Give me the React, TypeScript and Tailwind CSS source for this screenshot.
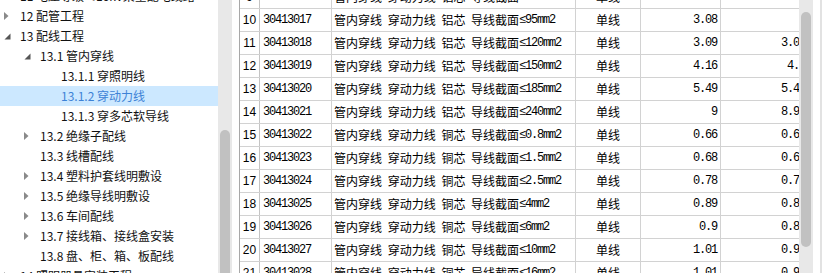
type TreeNode = {
  level: 0 | 1 | 2;
  label: string;
  arrow?: "right" | "down";
  selected?: boolean;
};

const treeNodes: TreeNode[] = [
  { level: 0, label: "11 电压等级≤10kV架空配电线路及附属设施工程", arrow: "right" },
  { level: 0, label: "12 配管工程", arrow: "right" },
  { level: 0, label: "13 配线工程", arrow: "down" },
  { level: 1, label: "13.1 管内穿线", arrow: "down" },
  { level: 2, label: "13.1.1 穿照明线" },
  { level: 2, label: "13.1.2 穿动力线", selected: true },
  { level: 2, label: "13.1.3 穿多芯软导线" },
  { level: 1, label: "13.2 绝缘子配线", arrow: "right" },
  { level: 1, label: "13.3 线槽配线" },
  { level: 1, label: "13.4 塑料护套线明敷设", arrow: "right" },
  { level: 1, label: "13.5 绝缘导线明敷设", arrow: "right" },
  { level: 1, label: "13.6 车间配线", arrow: "right" },
  { level: 1, label: "13.7 接线箱、接线盒安装", arrow: "right" },
  { level: 1, label: "13.8 盘、柜、箱、板配线" },
  { level: 0, label: "14 照明器具安装工程", arrow: "right" },
];

type Row = {
  no: number;
  code: string;
  core: string;
  size: string;
  qty: string;
  qty2: string;
};

const rows: Row[] = [
  { no: 9, code: "30413016", core: "铝芯", size: "≤70mm2", qty: "", qty2: "" },
  { no: 10, code: "30413017", core: "铝芯", size: "≤95mm2", qty: "3.08", qty2: "" },
  { no: 11, code: "30413018", core: "铝芯", size: "≤120mm2", qty: "3.09", qty2: "3.025" },
  { no: 12, code: "30413019", core: "铝芯", size: "≤150mm2", qty: "4.16", qty2: "4.16" },
  { no: 13, code: "30413020", core: "铝芯", size: "≤185mm2", qty: "5.49", qty2: "5.423" },
  { no: 14, code: "30413021", core: "铝芯", size: "≤240mm2", qty: "9", qty2: "8.914" },
  { no: 15, code: "30413022", core: "铜芯", size: "≤0.8mm2", qty: "0.66", qty2: "0.652" },
  { no: 16, code: "30413023", core: "铜芯", size: "≤1.5mm2", qty: "0.68", qty2: "0.672" },
  { no: 17, code: "30413024", core: "铜芯", size: "≤2.5mm2", qty: "0.78", qty2: "0.771" },
  { no: 18, code: "30413025", core: "铜芯", size: "≤4mm2", qty: "0.89", qty2: "0.880" },
  { no: 19, code: "30413026", core: "铜芯", size: "≤6mm2", qty: "0.9", qty2: "0.891" },
  { no: 20, code: "30413027", core: "铜芯", size: "≤10mm2", qty: "1.01", qty2: "0.999" },
  { no: 21, code: "30413028", core: "铜芯", size: "≤16mm2", qty: "1.01", qty2: "0.998" },
];

const cjk = "font-['Noto_Sans_CJK_SC',sans-serif] text-[12px]";
const mono = "font-['Liberation_Mono','Noto_Sans_CJK_SC',monospace] text-[12px] tracking-[-1.2px]";

const levelPad = ["pl-0", "pl-[20px]", "pl-[41px]"];

function Arrow({ dir }: { dir?: "right" | "down" }) {
  if (dir === "right") {
    return (
      <svg width="5" height="8" viewBox="0 0 5 8">
        <polygon points="0,0 4.5,4 0,8" fill="#8a8a8a" />
      </svg>
    );
  }
  if (dir === "down") {
    return (
      <svg width="7" height="7" viewBox="0 0 7 7">
        <polygon points="6.5,0.5 6.5,6.5 0.5,6.5" fill="#555555" />
      </svg>
    );
  }
  return null;
}

function TreePanel() {
  return (
    <div className={`w-[218px] shrink-0 overflow-hidden bg-white ${cjk}`}>
      <div className="mt-[-14px]">
        {treeNodes.map((node) => (
          <div
            key={node.label}
            className={`flex h-[20px] items-center ${node.selected ? "bg-[#cce8ff] text-[#3d82d6]" : "text-[#111]"}`}
          >
            <div className={`flex items-center ${levelPad[node.level]}`}>
              <div className="flex w-[20px] items-center pl-[4px]">
                <Arrow dir={node.arrow} />
              </div>
            </div>
            <span className="min-w-0 max-w-[190px] truncate whitespace-nowrap">{node.label}</span>
          </div>
        ))}
      </div>
    </div>
  );
}

function DataTable() {
  return (
    <div className="w-[560px] shrink-0 overflow-hidden bg-white">
      <div className="mt-[-14px] w-[576px] border-l border-[#a8a8a8] text-black">
        {rows.map((r) => (
          <div
            key={r.no}
            className="grid h-[23px] grid-cols-[20px_72px_244px_65px_80px_94px] border-b border-[#d2d2d2]"
          >
            <div className="flex items-center justify-center border-r border-[#c4c4c4] font-['Liberation_Sans',sans-serif] text-[12px]">
              {r.no}
            </div>
            <div className={`flex items-center border-r border-[#d2d2d2] pl-[3px] ${mono}`}>{r.code}</div>
            <div className="flex items-center whitespace-nowrap border-r border-[#d2d2d2] pl-[2px]">
              <span className={`${cjk} [word-spacing:3px]`}>管内穿线 穿动力线 {r.core} 导线截面</span>
              <span className={mono}>{r.size}</span>
            </div>
            <div className={`flex items-center justify-center border-r border-[#d2d2d2] ${cjk}`}>单线</div>
            <div className={`flex items-center justify-end border-r border-[#d2d2d2] pr-[3px] ${mono}`}>{r.qty}</div>
            <div className={`flex items-center justify-end border-r border-[#d2d2d2] pr-[3px] ${mono}`}>{r.qty2}</div>
          </div>
        ))}
      </div>
    </div>
  );
}

export default function App() {
  return (
    <div className="flex h-[273px] w-[822px] overflow-hidden bg-white">
      <TreePanel />
      {/* tree scrollbar */}
      <div className="w-[14px] shrink-0 bg-[#e8e8e8] px-[2px]">
        <div className="mt-[130px] h-[200px] w-[10px] rounded-full bg-[#c1c1c1]" />
      </div>
      <div className="w-[7px] shrink-0" />
      <DataTable />
      {/* table scrollbar */}
      <div className="w-[14px] shrink-0 bg-[#e8e8e8] px-[2px]">
        <div className="mt-[12px] h-[235px] w-[10px] rounded-full bg-[#c1c1c1]" />
      </div>
      <div className="w-[7px] shrink-0 bg-white" />
      <div className="w-[2px] shrink-0 bg-[#e2e2e2]" />
    </div>
  );
}
